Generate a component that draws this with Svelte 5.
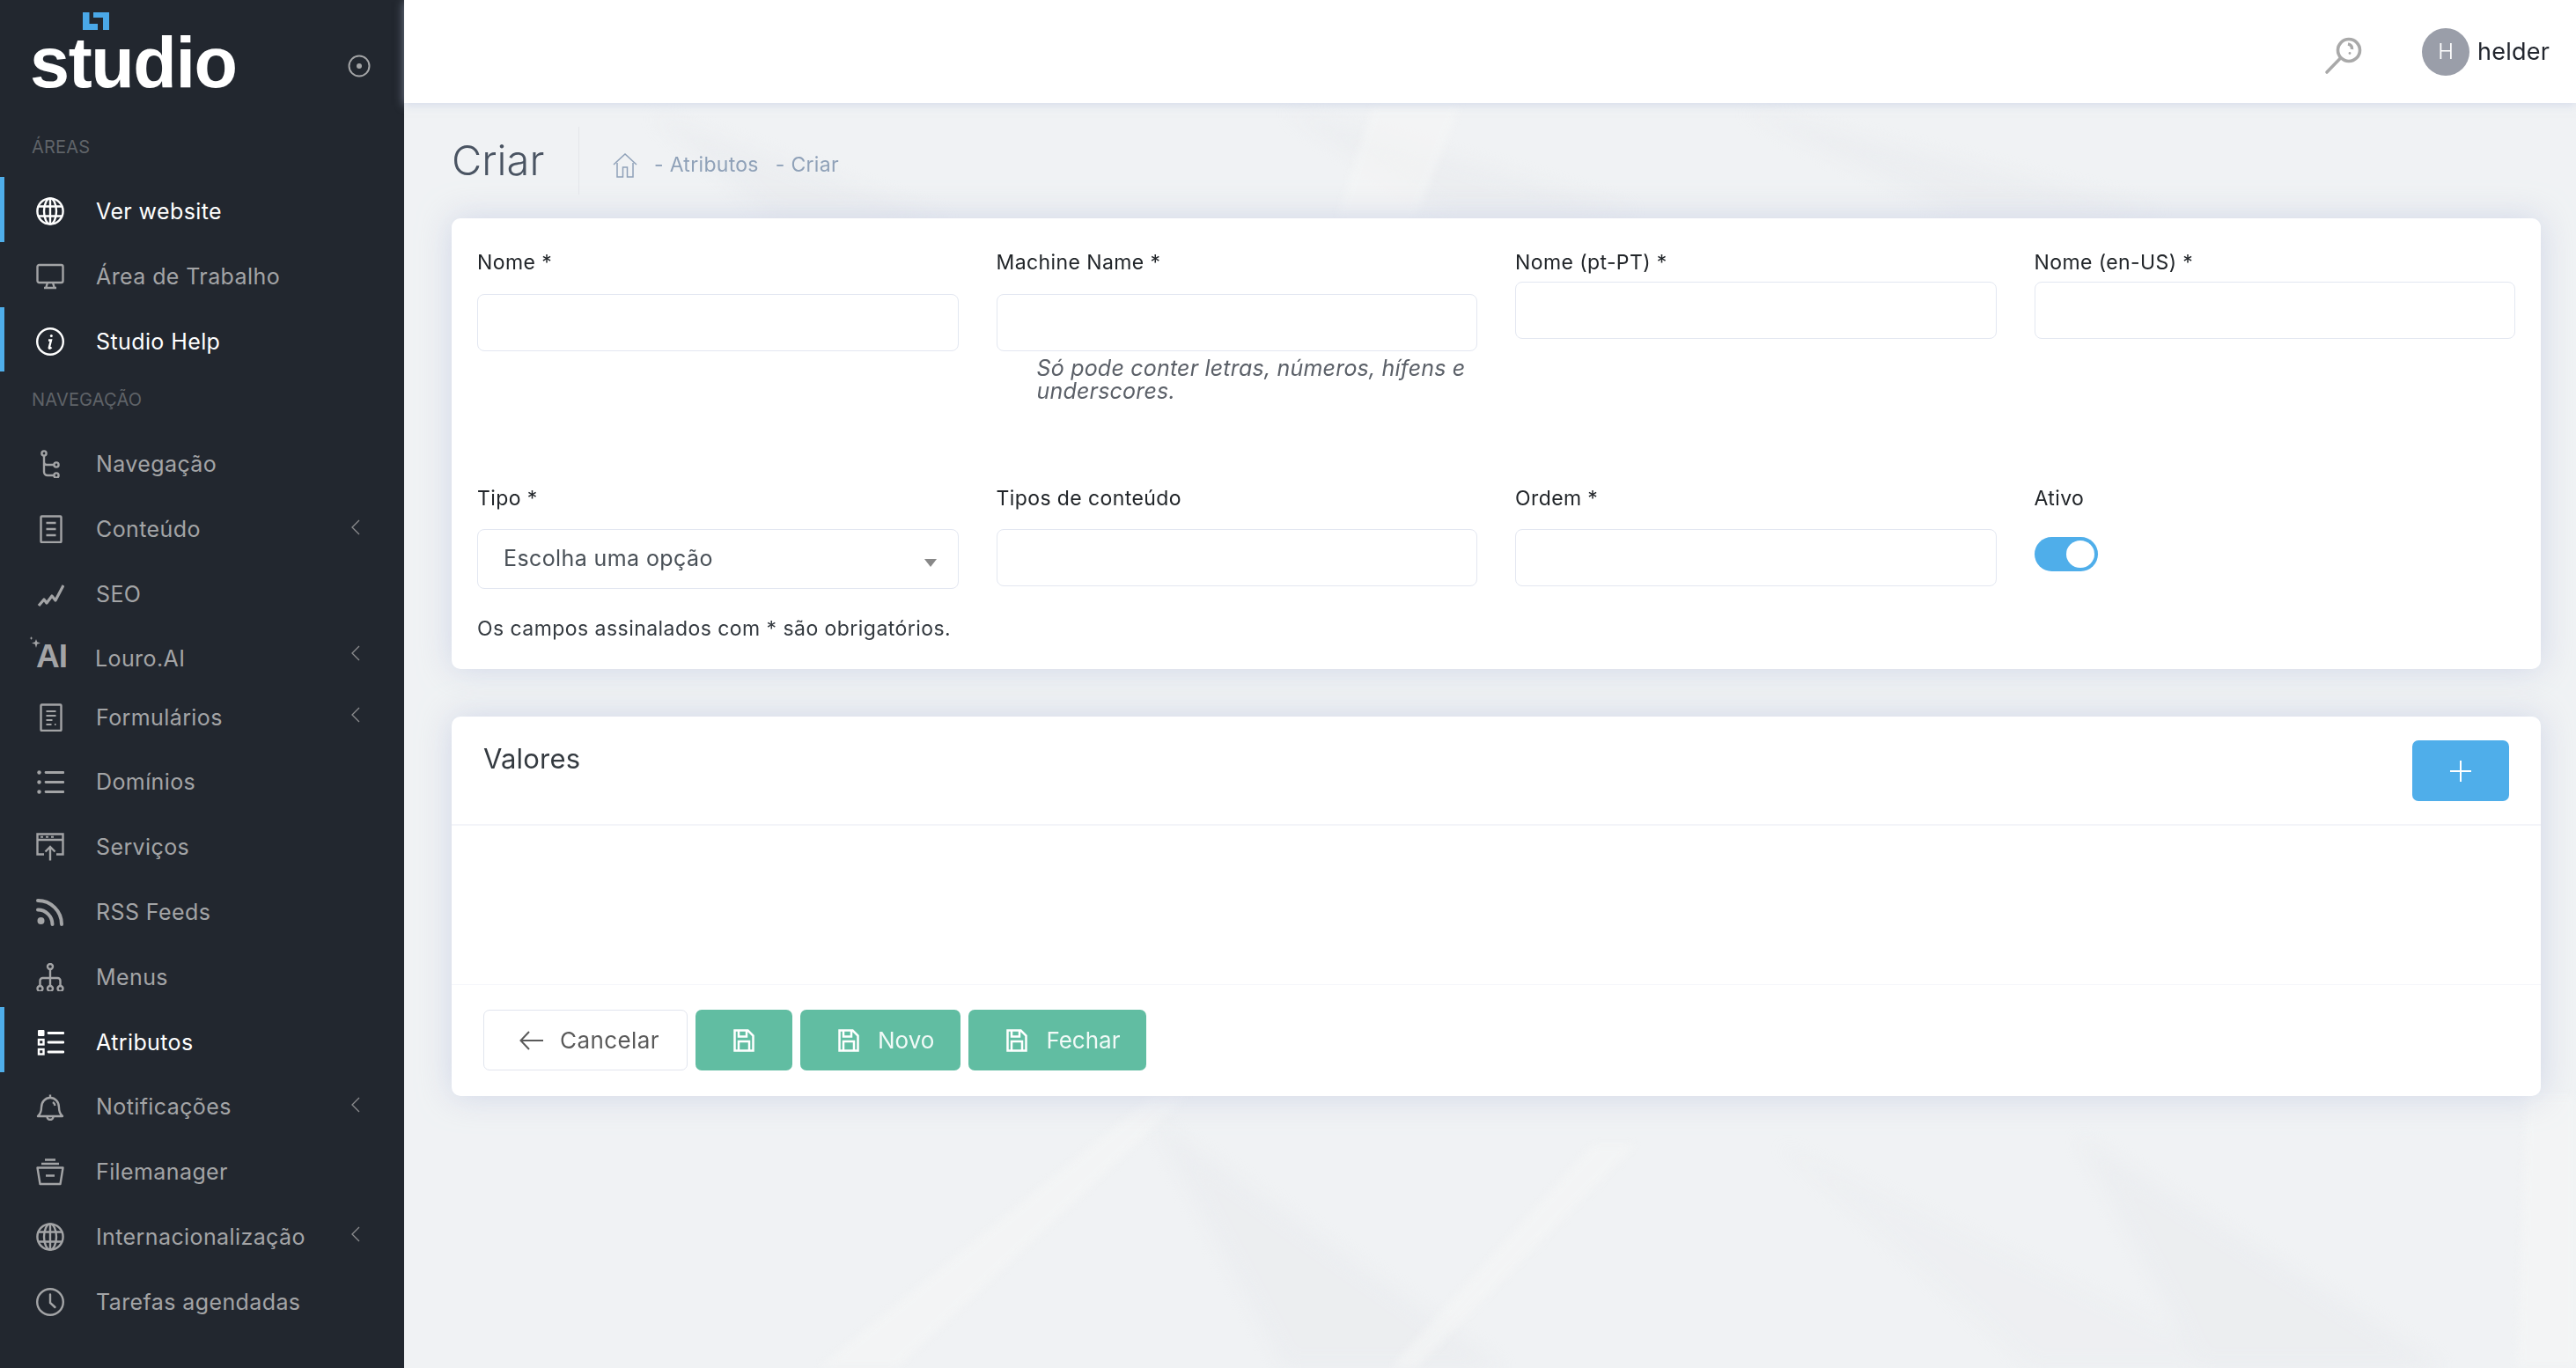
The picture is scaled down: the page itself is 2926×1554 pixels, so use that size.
<script>
  const icons = {
    globe: '<circle cx="16" cy="16" r="14.6"/><ellipse cx="16" cy="16" rx="7" ry="14.6"/><path d="M16 1.4v29.2M2.5 10.5h27M2.5 21.5h27"/>',
    monitor: '<rect x="1.5" y="3" width="29" height="20" rx="2"/><path d="M13 23l-1.5 5M19 23l1.5 5M9 29h14"/>',
    info: '<circle cx="16" cy="16" r="14.8"/><path d="M14 14.5h3l-2.2 8.5c-.2 1 .8 1.300 2.700-.5"/><circle cx="17.300" cy="9.500" r="1.500" fill="currentColor" stroke="none"/>',
    tree: '<circle cx="9" cy="4" r="2.600"/><circle cx="23" cy="17" r="2.600"/><circle cx="23" cy="29" r="2.600"/><path d="M9 6.600V25a4 4 0 0 0 4 4h7.400M9 13v1a3 3 0 0 0 3 3h8.400"/>',
    doc: '<rect x="5.500" y="1.500" width="23" height="29.500" rx="1"/><path d="M11.500 9h11M11.500 16h11M11.500 23h11" stroke-width="2.600"/>',
    seo: '<path d="M3 29l6-7 3 4 6-8 4 5L31 6" stroke-width="3.200" stroke-linejoin="round"/>',
    form: '<rect x="5.500" y="1.500" width="23" height="29.500" rx="1"/><path d="M11.500 9h11M11.500 14h11M11.500 19h7M11.500 24h6M21 24h1.500" stroke-width="2.200"/>',
    list: '<path d="M11 5.500h20M11 16.500h20M11 27.500h20" stroke-width="2.800" stroke-linecap="round"/><circle cx="3.500" cy="5.500" r="2.200" fill="currentColor" stroke="none"/><circle cx="3.500" cy="16.500" r="2.200" fill="currentColor" stroke="none"/><circle cx="3.500" cy="27.500" r="2.200" fill="currentColor" stroke="none"/>',
    service: '<path d="M9 24.500H1.500V1.500h29v23H23M1.500 8h29M16 31.500V16M10.500 21.500L16 16l5.500 5.500"/><path d="M5 4.800h3M11 4.800h3M17 4.800h3" stroke-width="2"/>',
    rss: '<circle cx="5.500" cy="26" r="4" fill="currentColor" stroke="none"/><path d="M2 13.500a16.500 16.500 0 0 1 16.500 16.500M2 3a27 27 0 0 1 27 27" stroke-width="4" stroke-linecap="round"/>',
    menus: '<circle cx="16" cy="4" r="3"/><circle cx="4.500" cy="29" r="3"/><circle cx="16" cy="29" r="3"/><circle cx="27.500" cy="29" r="3"/><path d="M16 7v19M4.500 26v-6a3 3 0 0 1 3-3h17a3 3 0 0 1 3 3v6"/>',
    attrs: '<rect x="2" y="2" width="7.500" height="7" rx="1" fill="currentColor" stroke="none"/><rect x="3" y="13" width="5.500" height="5.500"/><rect x="3" y="24" width="5.500" height="5.500"/><path d="M14 5.500h17M14 16h17M14 27h17" stroke-width="2.800" stroke-linecap="round"/>',
    bell: '<path d="M2 27c3-2.500 4-5 4-10 0-6.500 4.500-11 10-11s10 4.500 10 11c0 5 1 7.500 4 10z" stroke-linejoin="round"/><path d="M16 6V2.500M12.500 27.500a3.500 3.500 0 0 0 7 0M19 11c1.500 1 2.300 2.300 2.500 4" />',
    files: '<path d="M1.500 11.500h29L27.500 30h-23zM6 7h20M10 2.500h12M11 20.500h10" stroke-linejoin="round"/>',
    clock: '<circle cx="16" cy="16" r="14.800"/><path d="M16 7.500V17l5.500 5" stroke-linecap="round"/>'
  };

  const primary = [
    { label: "Ver website", icon: "globe", active: true },
    { label: "Área de Trabalho", icon: "monitor" },
    { label: "Studio Help", icon: "info", active: true }
  ];

  const nav = [
    { label: "Navegação", icon: "tree" },
    { label: "Conteúdo", icon: "doc", more: true },
    { label: "SEO", icon: "seo" },
    { label: "Louro.AI", icon: "ai", more: true },
    { label: "Formulários", icon: "form", more: true },
    { label: "Domínios", icon: "list" },
    { label: "Serviços", icon: "service" },
    { label: "RSS Feeds", icon: "rss" },
    { label: "Menus", icon: "menus" },
    { label: "Atributos", icon: "attrs", active: true },
    { label: "Notificações", icon: "bell", more: true },
    { label: "Filemanager", icon: "files" },
    { label: "Internacionalização", icon: "globe", more: true },
    { label: "Tarefas agendadas", icon: "clock" }
  ];
</script>

{#snippet navItem(item)}
  <a class="nav-item" class:active={item.active} class:ai={item.icon === "ai"} href="#top">
    {#if item.icon === "ai"}
      <span class="ai-mark">
        <svg class="sparks" viewBox="0 0 14 14" aria-hidden="true">
          <path d="M8 3l1.200 3.300L13 7.500 9.200 8.700 8 13 6.800 8.700 3 7.500l3.800-1.200z" />
          <path d="M2.500 0l.6 1.400 1.400.6-1.400.6-.6 1.400-.6-1.400L.5 2l1.400-.6z" />
        </svg>
        AI
      </span>
    {:else}
      <svg class="nav-icon" viewBox="0 0 32 32" aria-hidden="true">{@html icons[item.icon]}</svg>
    {/if}
    <span class="nav-label">{item.label}</span>
    {#if item.more}
      <svg class="chevron" viewBox="0 0 10 18" aria-hidden="true"><path d="M9 1L1 9l8 8" /></svg>
    {/if}
  </a>
{/snippet}

{#snippet saveIcon()}
  <svg class="save" viewBox="0 0 24 26" aria-hidden="true">
    <path d="M1.500 1.500h15l6 6v17h-21zM6 1.500v7h9v-7M6 24.500V14h12v10.500" />
  </svg>
{/snippet}

<div class="layout">
  <aside class="sidebar">
    <div class="brand">
      <div class="logo">
        <svg class="logo-mark" viewBox="0 0 30 20" aria-hidden="true">
          <path d="M0 0h7.500v13H17v7H0zM12 0h18v20h-7V6H12z" />
        </svg>
        <span class="logo-text">studio</span>
      </div>
      <svg class="pin" viewBox="0 0 26 26" aria-hidden="true">
        <circle cx="13" cy="13" r="11.500" />
        <circle class="pin-dot" cx="13" cy="13" r="3" />
      </svg>
    </div>

    <p class="section first">ÁREAS</p>
    {#each primary as item}
      {@render navItem(item)}
    {/each}
    <p class="section">NAVEGAÇÃO</p>
    {#each nav as item}
      {@render navItem(item)}
    {/each}
  </aside>

  <div class="main">
    <svg class="backdrop" viewBox="0 0 2467 1554" preserveAspectRatio="none" aria-hidden="true">
      <g class="shade">
        <polygon points="850,1272 1250,1554 1000,1554" />
        <polygon points="1900,1290 2320,1554 2040,1554" />
        <polygon points="1560,1300 2100,1554 1850,1554" opacity="0.5" />
        <polygon points="280,130 620,250 420,250" />
        <polygon points="1000,125 1400,240 1180,240" />
        <polygon points="1520,125 2000,240 1760,240" />
      </g>
      <g class="light">
        <polygon points="850,1245 890,1245 560,1554 470,1554" />
        <polygon points="1350,1300 1400,1300 1150,1554 1120,1554" />
        <polygon points="1100,120 1200,120 1150,245 1060,245" />
        <polygon points="2410,1245 2467,1245 2467,1554 2400,1554" />
      </g>
    </svg>

    <header class="topbar">
      <svg class="search" viewBox="0 0 44 44" aria-hidden="true">
        <circle cx="28" cy="16" r="12.500" />
        <path d="M18.500 25L3 41" stroke-linecap="round" />
        <path d="M27 9c3 .6 5 3 4.500 6" />
        <circle class="search-dot" cx="29" cy="19.500" r="1.400" />
      </svg>
      <div class="user">
        <span class="avatar">H</span>
        <span class="username">helder</span>
      </div>
    </header>

    <div class="page">
      <div class="heading">
        <h1>Criar</h1>
        <nav class="crumbs">
          <svg class="home" viewBox="0 0 28 28" aria-hidden="true">
            <path d="M1 13L14 1l13 12M5 11v16h6.500V16h5v11H23V11" />
          </svg>
          <span>- Atributos</span>
          <span>- Criar</span>
        </nav>
      </div>

      <section class="card form-card">
        <div class="row row-one">
          <div class="field tall">
            <label for="nome">Nome *</label>
            <input id="nome" />
          </div>
          <div class="field tall">
            <label for="machine">Machine Name *</label>
            <input id="machine" />
            <p class="hint">Só pode conter letras, números, hífens e underscores.</p>
          </div>
          <div class="field">
            <label for="pt">Nome (pt-PT) *</label>
            <input id="pt" />
          </div>
          <div class="field">
            <label for="en">Nome (en-US) *</label>
            <input id="en" />
          </div>
        </div>
        <div class="row row-two">
          <div class="field">
            <label for="tipo">Tipo *</label>
            <div class="select" id="tipo">
              Escolha uma opção
              <span class="caret"></span>
            </div>
          </div>
          <div class="field">
            <label for="tipos">Tipos de conteúdo</label>
            <input id="tipos" />
          </div>
          <div class="field">
            <label for="ordem">Ordem *</label>
            <input id="ordem" />
          </div>
          <div class="field">
            <span class="label-text">Ativo</span>
            <span class="toggle"><span class="knob"></span></span>
          </div>
        </div>
        <p class="note">Os campos assinalados com * são obrigatórios.</p>
      </section>

      <section class="card values-card">
        <div class="values-head">
          <h2>Valores</h2>
          <button class="add" aria-label="Adicionar">
            <svg viewBox="0 0 26 26" aria-hidden="true"><path d="M13 1v24M1 13h24" /></svg>
          </button>
        </div>
        <div class="values-body"></div>
        <div class="actions">
          <button class="btn cancel">
            <svg class="back" viewBox="0 0 28 22" aria-hidden="true"><path d="M11 1L1.500 11l9.500 10M1.500 11H27" /></svg>
            Cancelar
          </button>
          <button class="btn green icon-only" aria-label="Guardar">{@render saveIcon()}</button>
          <button class="btn green">{@render saveIcon()} Novo</button>
          <button class="btn green">{@render saveIcon()} Fechar</button>
        </div>
      </section>
    </div>
  </div>
</div>

<style>
  :global(body) {
    margin: 0;
    background: #f0f2f4;
    font-family: Inter, "Noto Sans", sans-serif;
  }

  .layout {
    display: flex;
    height: 1554px;
    overflow: hidden;
  }

  .sidebar {
    flex: 0 0 459px;
    box-sizing: border-box;
    background: #22272f;
    color: #a3a4a6;
  }

  .brand {
    display: flex;
    align-items: flex-start;
    justify-content: space-between;
    height: 141px;
    box-sizing: border-box;
    padding: 14px 38px 0 34px;
  }

  .logo {
    position: relative;
    width: 240px;
  }

  .logo-mark {
    position: absolute;
    left: 60px;
    top: 0;
    width: 30px;
    height: 20px;
    fill: #4aa8e8;
  }

  .logo-text {
    position: absolute;
    left: 0;
    top: 12px;
    color: #fff;
    font: 700 81px/90px "Liberation Sans", sans-serif;
    letter-spacing: -1.4px;
  }

  .pin {
    width: 26px;
    height: 26px;
    margin-top: 48px;
    fill: none;
    stroke: #a3a4a6;
    stroke-width: 2;
  }

  .pin-dot {
    fill: #a3a4a6;
    stroke: none;
  }

  .section {
    display: flex;
    align-items: center;
    box-sizing: border-box;
    margin: 0;
    padding: 0 0 2px 36px;
    height: 65.600px;
    color: #5f6368;
    font-size: 20px;
    letter-spacing: 0.2px;
  }

  .section.first {
    height: 60px;
    padding-bottom: 9px;
  }

  .nav-item {
    position: relative;
    display: flex;
    align-items: center;
    box-sizing: border-box;
    height: 73.800px;
    padding: 5px 0 0 41px;
    color: inherit;
    text-decoration: none;
    font-size: 25px;
    letter-spacing: 0.4px;
  }

  .nav-item.ai {
    height: 65.800px;
  }

  .nav-item.active {
    color: #fff;
    box-shadow: inset 5px 0 0 #4faeea;
  }

  .nav-icon {
    flex: none;
    width: 32px;
    height: 32px;
    fill: none;
    stroke: currentColor;
    stroke-width: 2.400;
  }

  .nav-label {
    margin-left: 36px;
  }

  .ai-mark {
    position: relative;
    flex: none;
    width: 34px;
    margin-top: 2px;
    color: #a3a4a6;
    font: 700 37px/36px "Liberation Sans", sans-serif;
    letter-spacing: -1px;
  }

  .sparks {
    position: absolute;
    left: -8px;
    top: -5px;
    width: 14px;
    height: 14px;
    fill: #a3a4a6;
  }

  .ai .nav-label {
    margin-left: 33px;
    margin-top: 6px;
  }

  .chevron {
    position: absolute;
    left: 399px;
    top: 50%;
    width: 10px;
    height: 18px;
    margin-top: -9px;
    fill: none;
    stroke: #8b8c8e;
    stroke-width: 1.300;
  }

  .main {
    position: relative;
    flex: 1;
    min-width: 0;
    display: flex;
    flex-direction: column;
  }

  .backdrop {
    position: absolute;
    inset: 0;
    width: 100%;
    height: 100%;
  }

  .shade {
    fill: #e6e8ec;
    opacity: 0.4;
    filter: blur(10px);
  }

  .light {
    fill: #f5f6f6;
    opacity: 0.6;
    filter: blur(4px);
  }

  .topbar {
    position: relative;
    flex: 0 0 117px;
    display: flex;
    align-items: center;
    justify-content: flex-end;
    padding-right: 30px;
    background: #fff;
    box-shadow: 0 2px 10px rgba(190, 200, 225, 0.55);
  }

  .search {
    width: 44px;
    height: 44px;
    margin: 9px 67px 0 0;
    fill: none;
    stroke: #a9a9a9;
    stroke-width: 3.600;
  }

  .search-dot {
    fill: #a9a9a9;
    stroke: none;
  }

  .user {
    display: flex;
    align-items: center;
    gap: 9px;
  }

  .avatar {
    display: flex;
    align-items: center;
    justify-content: center;
    width: 54px;
    height: 54px;
    border-radius: 50%;
    background: #9a9ea9;
    color: #fff;
    font-size: 24px;
    font-weight: 300;
  }

  .username {
    color: #22262e;
    font-size: 27px;
    letter-spacing: 0.2px;
    font-weight: 400;
  }

  .page {
    position: relative;
    padding: 0 40px 0 54px;
  }

  .heading {
    display: flex;
    align-items: center;
    height: 131px;
  }

  h1 {
    margin: -3px 0 0;
    width: 144px;
    color: #4a5462;
    font-size: 47px;
    font-weight: 300;
  }

  .crumbs {
    display: flex;
    align-items: center;
    height: 77px;
    padding-left: 38px;
    border-left: 1px solid #e4e6ea;
    color: #8fa1b8;
    font-size: 23px;
    letter-spacing: 0.3px;
  }

  .crumbs span {
    margin-left: 19px;
    margin-top: 8px;
  }

  .home {
    width: 28px;
    height: 28px;
    margin-top: 10px;
    fill: none;
    stroke: #8fa1b8;
    stroke-width: 1.500;
  }

  .card {
    background: #fff;
    border-radius: 10px;
    box-shadow: 0 0 36px rgba(190, 200, 225, 0.65);
  }

  .form-card {
    box-sizing: border-box;
    height: 512px;
    padding: 0 29px;
    margin-bottom: 54px;
  }

  .row {
    display: grid;
    grid-template-columns: repeat(4, 1fr);
    column-gap: 43px;
  }

  .row-one {
    height: 300px;
    padding-top: 34px;
    box-sizing: border-box;
  }

  .row-two {
    height: 152px;
    padding-top: 2px;
    box-sizing: border-box;
  }

  .field label,
  .label-text {
    display: block;
    height: 32px;
    margin-bottom: 6px;
    color: #212529;
    font-size: 23px;
    letter-spacing: 0.4px;
    line-height: 32px;
  }

  .field.tall label {
    margin-bottom: 20px;
  }

  .row-two .field label,
  .row-two .label-text {
    margin-bottom: 19px;
  }

  input {
    display: block;
    width: 100%;
    box-sizing: border-box;
    height: 65px;
    border: 1px solid #e3e7f1;
    border-radius: 8px;
    background: #fff;
    outline: none;
  }

  .select {
    position: relative;
    box-sizing: border-box;
    height: 68px;
    padding-left: 29px;
    border: 1px solid #e3e7f1;
    border-radius: 8px;
    color: #495057;
    font-size: 25px;
    letter-spacing: 0.4px;
    line-height: 64px;
  }

  .caret {
    position: absolute;
    right: 24px;
    top: 33px;
    border-style: solid;
    border-width: 9px 7px 0;
    border-color: #888 transparent transparent;
  }

  .hint {
    margin: 6px 0 0 46px;
    color: #5b6068;
    font-size: 25px;
    font-style: italic;
    letter-spacing: 0.2px;
    line-height: 26px;
  }

  .toggle {
    display: flex;
    justify-content: flex-end;
    box-sizing: border-box;
    width: 72px;
    height: 39px;
    margin-top: 28px;
    padding: 4px;
    border-radius: 20px;
    background: #4faeea;
  }

  .knob {
    width: 32px;
    height: 31px;
    border-radius: 50%;
    background: #fff;
  }

  .note {
    margin: 0;
    color: #343a40;
    font-size: 23px;
    letter-spacing: 0.45px;
  }

  .values-card {
    height: 431px;
    display: flex;
    flex-direction: column;
  }

  .values-head {
    flex: 0 0 124px;
    box-sizing: border-box;
    display: flex;
    justify-content: space-between;
    align-items: flex-start;
    padding: 27px 36px 0;
    border-bottom: 2px solid #f3f4f9;
  }

  h2 {
    margin: 0;
    color: #343a40;
    font-size: 31px;
    font-weight: 400;
    letter-spacing: 0.2px;
    line-height: 42px;
  }

  .add {
    display: flex;
    align-items: center;
    justify-content: center;
    width: 110px;
    height: 69px;
    border: 0;
    border-radius: 7px;
    background: #4faeea;
  }

  .add svg {
    width: 26px;
    height: 26px;
    fill: none;
    stroke: #fff;
    stroke-width: 2;
  }

  .values-body {
    flex: 0 0 180px;
    border-bottom: 1px solid #f5f6fa;
  }

  .actions {
    display: flex;
    gap: 9px;
    padding: 28px 36px 0;
  }

  .btn {
    display: flex;
    align-items: center;
    gap: 21px;
    box-sizing: border-box;
    height: 69px;
    padding: 0 30px 0 43px;
    border: 0;
    border-radius: 7px;
    font-family: inherit;
    font-size: 26px;
  }

  .cancel {
    width: 232px;
    gap: 18px;
    padding-left: 40px;
    border: 1px solid #e1e5ee;
    background: #fff;
    color: #5a5a5a;
    letter-spacing: 0.4px;
  }

  .back {
    width: 28px;
    height: 22px;
    fill: none;
    stroke: #5a5a5a;
    stroke-width: 2;
  }

  .green {
    background: #61bda2;
    color: #f1faf7;
  }

  .icon-only {
    width: 110px;
    padding: 0;
    justify-content: center;
  }

  .save {
    width: 24px;
    height: 26px;
    fill: none;
    stroke: #fff;
    stroke-width: 2.500;
  }
</style>
